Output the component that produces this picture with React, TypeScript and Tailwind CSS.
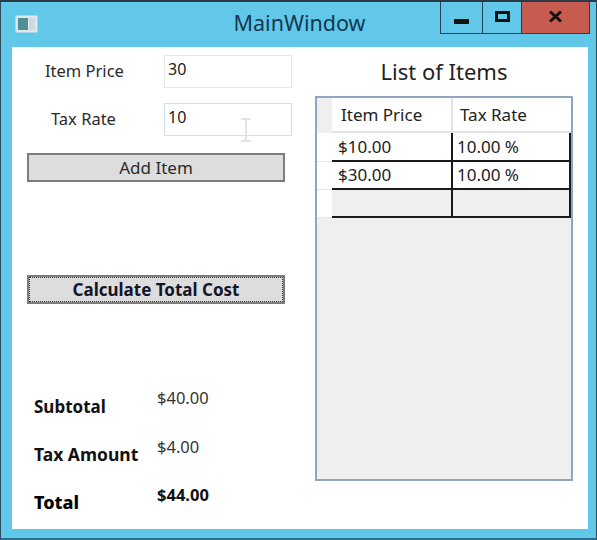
const font = { fontFamily: '"Noto Sans", sans-serif' };

function Field({ label, value, labelClass, inputClass, children }: { label: string; value: string; labelClass: string; inputClass: string; children?: React.ReactNode }) {
  return (
    <div className="flex h-[33px] items-center">
      <div className={`w-[152px] text-[16.5px] text-[#2a2a2a] ${labelClass}`}>{label}</div>
      <div className={`relative flex h-[33px] w-[128px] items-start border-[1.5px] bg-white pl-[3px] pt-[1px] text-[16px] text-[#222] ${inputClass}`}>
        {value}
        {children}
      </div>
    </div>
  );
}

function ResultRow({ label, value, labelClass, valueClass }: { label: string; value: string; labelClass: string; valueClass: string }) {
  return (
    <div className="flex h-[48px]">
      <div className={`h-[48px] w-[123px] leading-[24px] text-[#111] ${labelClass}`}>{label}</div>
      <div className={`text-[16.5px] leading-[22px] ${valueClass}`}>{value}</div>
    </div>
  );
}

const dataCell = "flex items-center border-b-2 border-r-2 border-[#1a1a1a] text-[17px] text-[#222]";

function DataRow({ a, b, h, bg }: { a: string; b: string; h: string; bg: string }) {
  return (
    <div className={`flex ${h}`}>
      <div className="w-[15px] border-b border-[#e3e6ea] bg-white" />
      <div className={`w-[121px] pl-[6px] ${dataCell} ${bg}`}>{a}</div>
      <div className={`w-[118px] pl-[4px] ${dataCell} ${bg}`}>{b}</div>
    </div>
  );
}

export default function App() {
  return (
    <div style={font} className="flex h-[540px] w-[597px] flex-col border-x border-b-2 border-t-2 border-x-[#2d4a5a] border-b-[#2b6f8c] border-t-[#2b3a44] bg-[#62c8ea] px-[11px]">
      <header className="relative flex h-[45px] shrink-0 items-center justify-center">
        <div className="absolute left-[3px] top-[13px] flex h-[18px] w-[23px] gap-[1px] rounded-[2px] border border-[#a8d6e8] bg-[#dfe9ed] p-[2px]">
          <div className="h-full w-[11px] bg-[#4f8f96]" />
          <div className="h-full w-[6px] bg-[#cfd8dc]" />
        </div>
        <div className="pb-[3px] pl-[2px] text-[21.5px] text-[#12384e]">MainWindow</div>
        <div className="absolute right-[-5px] top-0 flex h-[32px] border border-t-0 border-[#23414f]">
          <div className="flex w-[42px] items-center justify-center border-r border-[#23414f]">
            <div className="mt-[8px] h-[5px] w-[15px] bg-[#111]" />
          </div>
          <div className="flex w-[39px] items-center justify-center border-r border-[#23414f]">
            <div className="mb-[3px] h-[11px] w-[15px] border-[3px] border-[#111]" />
          </div>
          <div className="flex w-[67px] items-center justify-center bg-[#c75b50]">
            <svg width="15" height="13" viewBox="0 0 15 13" className="mb-[3px]">
              <path d="M2 1.5 L13 11.5 M13 1.5 L2 11.5" stroke="#111" strokeWidth="3" />
            </svg>
          </div>
        </div>
      </header>

      <main className="flex h-[482px] w-[576px] shrink-0 bg-white">
        <section className="flex w-[303px] shrink-0 flex-col pt-[8px]">
          <div className="flex flex-col gap-[15px]">
            <Field label="Item Price" value="30" labelClass="pl-[33px]" inputClass="border-[#e6e8ea]" />
            <Field label="Tax Rate" value="10" labelClass="pl-[39px]" inputClass="border-[#cfe0ee]">
              <svg width="14" height="24" viewBox="0 0 14 24" className="absolute left-[74px] top-[14px]">
                <path d="M2 1 H12 M7 1 V23 M2 23 H12" stroke="#dcdcdc" strokeWidth="1.5" fill="none" />
              </svg>
            </Field>
          </div>
          <button className="ml-[15px] mt-[17px] h-[29px] w-[258px] border-2 border-[#7d7d7d] bg-[#dddddd] pt-[1px] text-[17px] leading-[24px] text-[#2a2a2a]">
            Add Item
          </button>
          <button className="ml-[15px] mt-[93px] flex h-[29px] w-[258px] items-center justify-center border-2 border-[#7d7d7d] bg-[#dddddd] pt-[1px] text-[17px] font-bold text-[#14142a] outline-1 -outline-offset-3 outline-dotted outline-[#333]">
            Calculate Total Cost
          </button>
          <div className="ml-[22px] mt-[82px] flex flex-col">
            <ResultRow label="Subtotal" value="$40.00" labelClass="pt-[9px] text-[17px] font-bold" valueClass="pt-[1px] text-[#333]" />
            <ResultRow label="Tax Amount" value="$4.00" labelClass="pt-[8px] text-[17.5px] font-bold" valueClass="pt-[2px] text-[#333]" />
            <ResultRow label="Total" value="$44.00" labelClass="pt-[8px] text-[18px] font-extrabold text-black" valueClass="pt-[2px] font-bold text-[#111]" />
          </div>
        </section>

        <section className="flex w-[258px] shrink-0 flex-col">
          <h2 className="flex h-[49px] items-center justify-center text-[22px] text-[#222]">List of Items</h2>
          <div className="flex h-[385px] flex-col border-2 border-[#8fa6c1] bg-[#efefef]">
            <div className="flex h-[35px] shrink-0">
              <div className="w-[15px] bg-[#efefef]" />
              <div className="flex w-[121px] items-center border-b-2 border-r-2 border-[#e1e4ea] bg-white pl-[9px] pt-[1px] text-[17px] text-[#222]">Item Price</div>
              <div className="flex w-[118px] items-center border-b-2 border-[#e1e4ea] bg-white pl-[7px] pt-[1px] text-[17px] text-[#222]">Tax Rate</div>
            </div>
            <DataRow a="$10.00" b="10.00 %" h="h-[29px]" bg="bg-white" />
            <DataRow a="$30.00" b="10.00 %" h="h-[28px]" bg="bg-white" />
            <DataRow a="" b="" h="h-[28px]" bg="bg-[#efefef]" />
          </div>
        </section>
      </main>
    </div>
  );
}
